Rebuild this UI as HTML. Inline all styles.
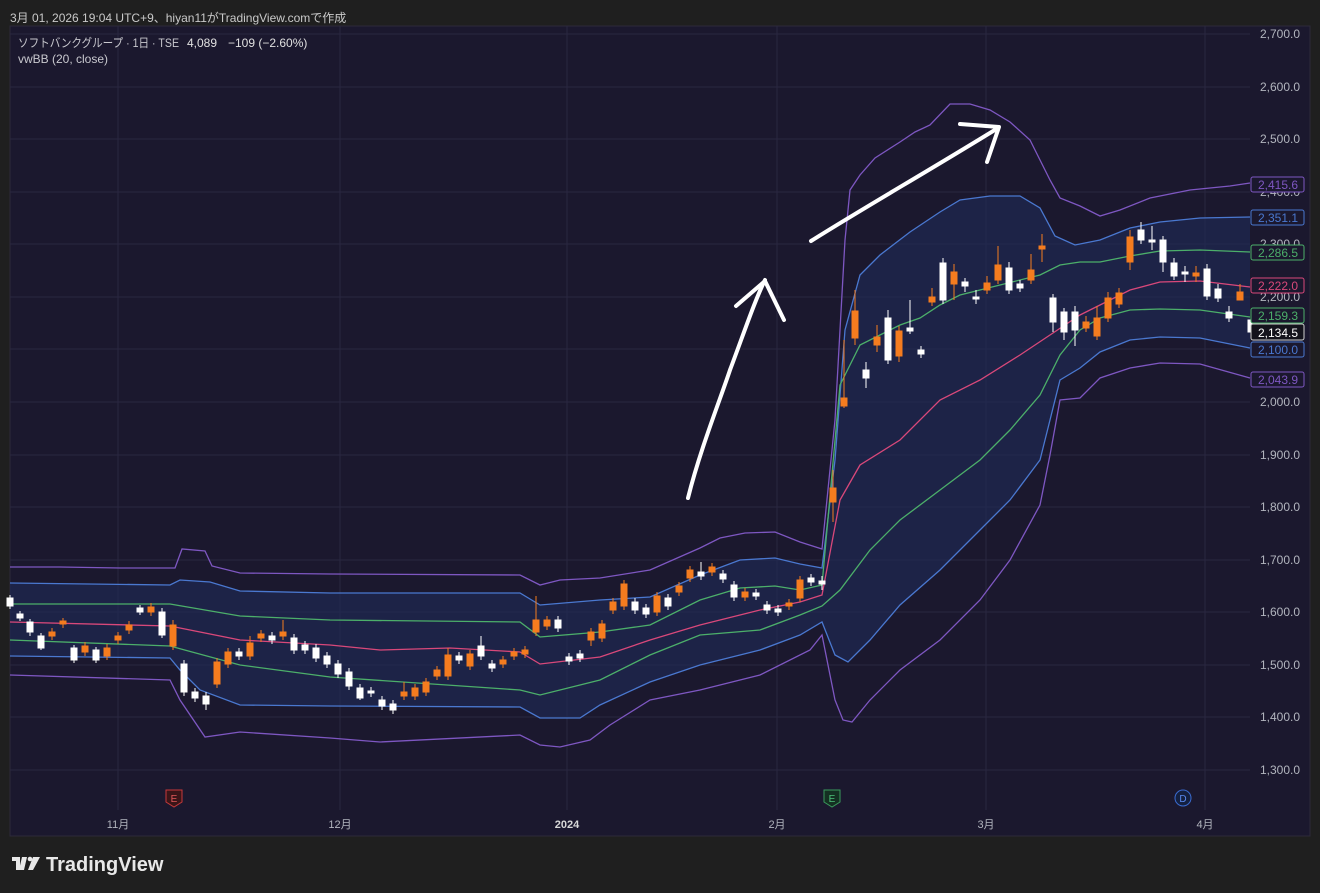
<!DOCTYPE html>
<html><head><meta charset="utf-8"><style>
html,body{margin:0;padding:0;background:#1f1f1f;width:1320px;height:893px;overflow:hidden;font-family:"Liberation Sans","Noto Sans CJK JP",sans-serif}
.top{position:absolute;left:10px;top:9px;font-size:12px;color:#c9c9c9}
</style></head><body>
<div class="top">3月 01, 2026 19:04 UTC+9、hiyan11がTradingView.comで作成</div>
<svg style="position:absolute;left:0;top:0" width="1320" height="893" font-family="Liberation Sans, Noto Sans CJK JP, sans-serif">
<rect x="10" y="26" width="1300" height="810" fill="#1b182e" stroke="#2c2a3a"/>
<g stroke="#2a2740" stroke-width="1">
<line x1="10" x2="1250" y1="34" y2="34"/><line x1="10" x2="1250" y1="87" y2="87"/><line x1="10" x2="1250" y1="139" y2="139"/><line x1="10" x2="1250" y1="192" y2="192"/><line x1="10" x2="1250" y1="244" y2="244"/><line x1="10" x2="1250" y1="297" y2="297"/><line x1="10" x2="1250" y1="349" y2="349"/><line x1="10" x2="1250" y1="402" y2="402"/><line x1="10" x2="1250" y1="455" y2="455"/><line x1="10" x2="1250" y1="507" y2="507"/><line x1="10" x2="1250" y1="560" y2="560"/><line x1="10" x2="1250" y1="612" y2="612"/><line x1="10" x2="1250" y1="665" y2="665"/><line x1="10" x2="1250" y1="717" y2="717"/><line x1="10" x2="1250" y1="770" y2="770"/>
<line y1="26" y2="810" x1="118" x2="118"/><line y1="26" y2="810" x1="340" x2="340"/><line y1="26" y2="810" x1="567" x2="567"/><line y1="26" y2="810" x1="777" x2="777"/><line y1="26" y2="810" x1="986" x2="986"/><line y1="26" y2="810" x1="1205" x2="1205"/>
</g>
<polygon fill="#1f2a55" fill-opacity="0.65" points="10,583 170,585 180,580 210,582 240,591 330,593 520,593 540,605 600,600 650,597 700,575 740,560 775,558 800,564 822,568 835,460 845,330 860,275 880,255 910,232 940,212 960,200 990,196 1020,196 1040,208 1055,236 1075,245 1100,240 1130,228 1160,222 1200,218 1250,217 1250,348 1200,338 1160,337 1130,340 1100,352 1080,368 1060,380 1040,460 1010,500 980,530 940,570 900,605 870,640 848,662 835,655 822,622 800,635 760,650 700,665 650,682 600,705 580,718 540,718 520,707 330,706 240,705 200,690 180,670 170,658 10,656"/>
<g fill="none" stroke-width="1.3">
<polyline stroke="#7e57c2" points="10,567 60,567 120,568 175,568 182,549 205,551 212,566 240,573 330,574 520,575 540,585 560,580 600,578 650,570 700,548 720,538 745,533 775,532 800,542 822,549 835,420 845,240 850,190 860,175 875,158 900,142 915,132 930,125 950,104 970,104 990,110 1010,122 1030,140 1050,180 1060,198 1080,206 1100,216 1120,210 1150,198 1190,190 1230,186 1250,183"/>
<polyline stroke="#4a78d0" points="10,583 170,585 180,580 210,582 240,591 330,593 520,593 540,605 600,600 650,597 700,575 740,560 775,558 800,564 822,568 835,460 845,330 860,275 880,255 910,232 940,212 960,200 990,196 1020,196 1040,208 1055,236 1075,245 1100,240 1130,228 1160,222 1200,218 1250,217"/>
<polyline stroke="#4caf6a" points="10,604 170,604 240,616 330,620 520,622 540,637 600,632 650,625 700,600 740,588 775,586 800,590 822,585 840,385 860,345 880,335 900,325 920,318 940,305 960,295 1000,285 1040,275 1060,265 1080,262 1100,262 1130,256 1160,251 1200,250 1250,252"/>
<polyline stroke="#d9487a" points="10,622 170,626 240,640 330,645 380,650 450,648 520,652 540,664 600,657 650,640 700,625 760,610 800,602 822,595 840,500 860,465 900,440 940,400 980,380 1020,355 1050,335 1080,315 1100,305 1130,290 1160,282 1200,281 1250,287"/>
<polyline stroke="#4caf6a" points="10,640 170,646 240,665 330,677 520,690 540,695 600,680 650,655 700,635 760,630 800,615 822,606 840,590 870,550 900,520 940,490 980,460 1010,430 1040,395 1060,355 1080,330 1100,318 1130,310 1160,309 1200,310 1250,317"/>
<polyline stroke="#4a78d0" points="10,656 170,658 180,670 200,690 240,705 330,706 520,707 540,718 580,718 600,705 650,682 700,665 760,650 800,635 822,622 835,655 848,662 870,640 900,605 940,570 980,530 1010,500 1040,460 1060,380 1080,368 1100,352 1130,340 1160,337 1200,338 1250,348"/>
<polyline stroke="#7e57c2" points="10,675 170,680 180,700 205,737 240,732 330,738 380,742 520,735 540,745 560,747 590,740 610,725 650,700 700,690 760,675 810,650 822,635 835,700 843,720 852,722 870,700 900,670 940,640 980,600 1010,560 1040,505 1050,455 1060,400 1080,398 1100,378 1130,368 1160,363 1200,364 1250,378"/>
</g>
<g>
<g fill="#ffffff" stroke="#ffffff">
<line x1="10" x2="10" y1="595" y2="609"/><rect x="7" y="598" width="6" height="8"/>
<line x1="20" x2="20" y1="611" y2="621"/><rect x="17" y="614" width="6" height="4"/>
<line x1="30" x2="30" y1="619" y2="636"/><rect x="27" y="622" width="6" height="10"/>
<line x1="41" x2="41" y1="633" y2="650"/><rect x="38" y="636" width="6" height="12"/>
<line x1="74" x2="74" y1="645" y2="663"/><rect x="71" y="648" width="6" height="12"/>
<line x1="96" x2="96" y1="647" y2="663"/><rect x="93" y="650" width="6" height="10"/>
<line x1="140" x2="140" y1="605" y2="615"/><rect x="137" y="608" width="6" height="4"/>
<line x1="162" x2="162" y1="608" y2="638"/><rect x="159" y="612" width="6" height="23"/>
<line x1="184" x2="184" y1="660" y2="696"/><rect x="181" y="664" width="6" height="28"/>
<line x1="195" x2="195" y1="688" y2="702"/><rect x="192" y="692" width="6" height="6"/>
<line x1="206" x2="206" y1="692" y2="710"/><rect x="203" y="696" width="6" height="8"/>
<line x1="239" x2="239" y1="648" y2="660"/><rect x="236" y="652" width="6" height="4"/>
<line x1="272" x2="272" y1="632" y2="644"/><rect x="269" y="636" width="6" height="4"/>
<line x1="294" x2="294" y1="634" y2="654"/><rect x="291" y="638" width="6" height="12"/>
<line x1="305" x2="305" y1="641" y2="654"/><rect x="302" y="645" width="6" height="5"/>
<line x1="316" x2="316" y1="644" y2="662"/><rect x="313" y="648" width="6" height="10"/>
<line x1="327" x2="327" y1="652" y2="668"/><rect x="324" y="656" width="6" height="8"/>
<line x1="338" x2="338" y1="660" y2="678"/><rect x="335" y="664" width="6" height="10"/>
<line x1="349" x2="349" y1="668" y2="690"/><rect x="346" y="672" width="6" height="14"/>
<line x1="360" x2="360" y1="684" y2="700"/><rect x="357" y="688" width="6" height="10"/>
<line x1="371" x2="371" y1="687" y2="697"/><rect x="368" y="691" width="6" height="2"/>
<line x1="382" x2="382" y1="696" y2="710"/><rect x="379" y="700" width="6" height="6"/>
<line x1="393" x2="393" y1="700" y2="714"/><rect x="390" y="704" width="6" height="6"/>
<line x1="459" x2="459" y1="652" y2="664"/><rect x="456" y="656" width="6" height="4"/>
<line x1="481" x2="481" y1="636" y2="660"/><rect x="478" y="646" width="6" height="10"/>
<line x1="492" x2="492" y1="660" y2="672"/><rect x="489" y="664" width="6" height="4"/>
<line x1="558" x2="558" y1="616" y2="632"/><rect x="555" y="620" width="6" height="8"/>
<line x1="569" x2="569" y1="653" y2="665"/><rect x="566" y="657" width="6" height="4"/>
<line x1="580" x2="580" y1="650" y2="662"/><rect x="577" y="654" width="6" height="4"/>
<line x1="635" x2="635" y1="598" y2="614"/><rect x="632" y="602" width="6" height="8"/>
<line x1="646" x2="646" y1="604" y2="618"/><rect x="643" y="608" width="6" height="6"/>
<line x1="668" x2="668" y1="594" y2="610"/><rect x="665" y="598" width="6" height="8"/>
<line x1="701" x2="701" y1="562" y2="580"/><rect x="698" y="572" width="6" height="4"/>
<line x1="723" x2="723" y1="570" y2="583"/><rect x="720" y="574" width="6" height="5"/>
<line x1="734" x2="734" y1="581" y2="601"/><rect x="731" y="585" width="6" height="12"/>
<line x1="756" x2="756" y1="589" y2="600"/><rect x="753" y="593" width="6" height="3"/>
<line x1="767" x2="767" y1="601" y2="614"/><rect x="764" y="605" width="6" height="5"/>
<line x1="778" x2="778" y1="605" y2="616"/><rect x="775" y="609" width="6" height="3"/>
<line x1="811" x2="811" y1="574" y2="586"/><rect x="808" y="578" width="6" height="4"/>
<line x1="822" x2="822" y1="576" y2="590"/><rect x="819" y="581" width="6" height="3"/>
<line x1="866" x2="866" y1="362" y2="388"/><rect x="863" y="370" width="6" height="8"/>
<line x1="888" x2="888" y1="310" y2="364"/><rect x="885" y="318" width="6" height="42"/>
<line x1="910" x2="910" y1="300" y2="334"/><rect x="907" y="328" width="6" height="3"/>
<line x1="921" x2="921" y1="346" y2="358"/><rect x="918" y="350" width="6" height="4"/>
<line x1="943" x2="943" y1="258" y2="304"/><rect x="940" y="263" width="6" height="37"/>
<line x1="965" x2="965" y1="278" y2="292"/><rect x="962" y="282" width="6" height="4"/>
<line x1="976" x2="976" y1="290" y2="304"/><rect x="973" y="297" width="6" height="2"/>
<line x1="1009" x2="1009" y1="262" y2="294"/><rect x="1006" y="268" width="6" height="22"/>
<line x1="1020" x2="1020" y1="280" y2="292"/><rect x="1017" y="284" width="6" height="4"/>
<line x1="1053" x2="1053" y1="294" y2="332"/><rect x="1050" y="298" width="6" height="24"/>
<line x1="1064" x2="1064" y1="308" y2="340"/><rect x="1061" y="312" width="6" height="20"/>
<line x1="1075" x2="1075" y1="306" y2="346"/><rect x="1072" y="312" width="6" height="18"/>
<line x1="1141" x2="1141" y1="222" y2="244"/><rect x="1138" y="230" width="6" height="10"/>
<line x1="1152" x2="1152" y1="226" y2="250"/><rect x="1149" y="240" width="6" height="2"/>
<line x1="1163" x2="1163" y1="236" y2="272"/><rect x="1160" y="240" width="6" height="22"/>
<line x1="1174" x2="1174" y1="258" y2="280"/><rect x="1171" y="263" width="6" height="13"/>
<line x1="1185" x2="1185" y1="266" y2="282"/><rect x="1182" y="272" width="6" height="2"/>
<line x1="1207" x2="1207" y1="264" y2="300"/><rect x="1204" y="269" width="6" height="27"/>
<line x1="1218" x2="1218" y1="284" y2="302"/><rect x="1215" y="289" width="6" height="9"/>
<line x1="1229" x2="1229" y1="306" y2="322"/><rect x="1226" y="312" width="6" height="6"/>
<line x1="1251" x2="1251" y1="316" y2="336"/><rect x="1248" y="320" width="5" height="12"/>
</g>
<g fill="#f57c1f" stroke="#f57c1f">
<line x1="52" x2="52" y1="628" y2="640"/><rect x="49" y="632" width="6" height="4"/>
<line x1="63" x2="63" y1="618" y2="628"/><rect x="60" y="621" width="6" height="3"/>
<line x1="85" x2="85" y1="642" y2="656"/><rect x="82" y="646" width="6" height="6"/>
<line x1="107" x2="107" y1="644" y2="660"/><rect x="104" y="648" width="6" height="8"/>
<line x1="118" x2="118" y1="632" y2="644"/><rect x="115" y="636" width="6" height="4"/>
<line x1="129" x2="129" y1="621" y2="634"/><rect x="126" y="625" width="6" height="5"/>
<line x1="151" x2="151" y1="603" y2="616"/><rect x="148" y="607" width="6" height="5"/>
<line x1="173" x2="173" y1="620" y2="650"/><rect x="170" y="625" width="6" height="21"/>
<line x1="217" x2="217" y1="658" y2="688"/><rect x="214" y="662" width="6" height="22"/>
<line x1="228" x2="228" y1="648" y2="668"/><rect x="225" y="652" width="6" height="12"/>
<line x1="250" x2="250" y1="636" y2="660"/><rect x="247" y="643" width="6" height="13"/>
<line x1="261" x2="261" y1="630" y2="642"/><rect x="258" y="634" width="6" height="4"/>
<line x1="283" x2="283" y1="620" y2="640"/><rect x="280" y="632" width="6" height="4"/>
<line x1="404" x2="404" y1="682" y2="700"/><rect x="401" y="692" width="6" height="4"/>
<line x1="415" x2="415" y1="684" y2="700"/><rect x="412" y="688" width="6" height="8"/>
<line x1="426" x2="426" y1="678" y2="696"/><rect x="423" y="682" width="6" height="10"/>
<line x1="437" x2="437" y1="666" y2="680"/><rect x="434" y="670" width="6" height="6"/>
<line x1="448" x2="448" y1="648" y2="680"/><rect x="445" y="655" width="6" height="21"/>
<line x1="470" x2="470" y1="650" y2="670"/><rect x="467" y="654" width="6" height="12"/>
<line x1="503" x2="503" y1="656" y2="668"/><rect x="500" y="660" width="6" height="4"/>
<line x1="514" x2="514" y1="648" y2="660"/><rect x="511" y="652" width="6" height="4"/>
<line x1="525" x2="525" y1="646" y2="658"/><rect x="522" y="650" width="6" height="4"/>
<line x1="536" x2="536" y1="596" y2="636"/><rect x="533" y="620" width="6" height="12"/>
<line x1="547" x2="547" y1="616" y2="630"/><rect x="544" y="620" width="6" height="6"/>
<line x1="591" x2="591" y1="628" y2="646"/><rect x="588" y="632" width="6" height="8"/>
<line x1="602" x2="602" y1="620" y2="642"/><rect x="599" y="624" width="6" height="14"/>
<line x1="613" x2="613" y1="598" y2="614"/><rect x="610" y="602" width="6" height="8"/>
<line x1="624" x2="624" y1="580" y2="610"/><rect x="621" y="584" width="6" height="22"/>
<line x1="657" x2="657" y1="592" y2="616"/><rect x="654" y="596" width="6" height="16"/>
<line x1="679" x2="679" y1="582" y2="596"/><rect x="676" y="586" width="6" height="6"/>
<line x1="690" x2="690" y1="566" y2="582"/><rect x="687" y="570" width="6" height="8"/>
<line x1="712" x2="712" y1="563" y2="576"/><rect x="709" y="567" width="6" height="5"/>
<line x1="745" x2="745" y1="588" y2="601"/><rect x="742" y="592" width="6" height="5"/>
<line x1="789" x2="789" y1="599" y2="610"/><rect x="786" y="603" width="6" height="3"/>
<line x1="800" x2="800" y1="576" y2="602"/><rect x="797" y="580" width="6" height="18"/>
<line x1="833" x2="833" y1="470" y2="522"/><rect x="830" y="488" width="6" height="14"/>
<line x1="844" x2="844" y1="340" y2="408"/><rect x="841" y="398" width="6" height="8"/>
<line x1="855" x2="855" y1="290" y2="345"/><rect x="852" y="311" width="6" height="27"/>
<line x1="877" x2="877" y1="325" y2="352"/><rect x="874" y="337" width="6" height="8"/>
<line x1="899" x2="899" y1="326" y2="362"/><rect x="896" y="331" width="6" height="25"/>
<line x1="932" x2="932" y1="288" y2="306"/><rect x="929" y="297" width="6" height="5"/>
<line x1="954" x2="954" y1="264" y2="300"/><rect x="951" y="272" width="6" height="12"/>
<line x1="987" x2="987" y1="276" y2="294"/><rect x="984" y="283" width="6" height="7"/>
<line x1="998" x2="998" y1="246" y2="284"/><rect x="995" y="265" width="6" height="15"/>
<line x1="1031" x2="1031" y1="254" y2="284"/><rect x="1028" y="270" width="6" height="10"/>
<line x1="1042" x2="1042" y1="234" y2="262"/><rect x="1039" y="246" width="6" height="3"/>
<line x1="1086" x2="1086" y1="316" y2="332"/><rect x="1083" y="322" width="6" height="6"/>
<line x1="1097" x2="1097" y1="306" y2="340"/><rect x="1094" y="318" width="6" height="18"/>
<line x1="1108" x2="1108" y1="292" y2="322"/><rect x="1105" y="298" width="6" height="20"/>
<line x1="1119" x2="1119" y1="288" y2="308"/><rect x="1116" y="293" width="6" height="11"/>
<line x1="1130" x2="1130" y1="230" y2="270"/><rect x="1127" y="237" width="6" height="25"/>
<line x1="1196" x2="1196" y1="266" y2="282"/><rect x="1193" y="273" width="6" height="3"/>
<line x1="1240" x2="1240" y1="284" y2="300"/><rect x="1237" y="292" width="6" height="8"/>
</g>
</g>
<g stroke="#ffffff" stroke-width="4" fill="none" stroke-linecap="round" stroke-linejoin="round">
<path d="M688 498 C700 450 720 400 730 370 C745 330 755 300 765 280"/>
<path d="M736 306 L765 281 L784 320"/>
<path d="M811 241 C860 210 930 170 998 128"/>
<path d="M960 124 L999 127 L987 162"/>
</g>
<g font-size="12" fill="#b2b5be" text-anchor="start">
<text x="1260" y="38">2,700.0</text><text x="1260" y="91">2,600.0</text><text x="1260" y="143">2,500.0</text><text x="1260" y="196">2,400.0</text><text x="1260" y="248">2,300.0</text><text x="1260" y="301">2,200.0</text><text x="1260" y="406">2,000.0</text><text x="1260" y="459">1,900.0</text><text x="1260" y="511">1,800.0</text><text x="1260" y="564">1,700.0</text><text x="1260" y="616">1,600.0</text><text x="1260" y="669">1,500.0</text><text x="1260" y="721">1,400.0</text><text x="1260" y="774">1,300.0</text>
</g>
<g font-size="12" text-anchor="start">
<rect x="1251" y="177" width="53" height="15" fill="#1b182e" stroke="#7e57c2" rx="2"/><text x="1258" y="189" fill="#7e57c2">2,415.6</text>
<rect x="1251" y="210" width="53" height="15" fill="#1b182e" stroke="#4a78d0" rx="2"/><text x="1258" y="222" fill="#4a78d0">2,351.1</text>
<rect x="1251" y="245" width="53" height="15" fill="#1b182e" stroke="#4caf6a" rx="2"/><text x="1258" y="257" fill="#4caf6a">2,286.5</text>
<rect x="1251" y="278" width="53" height="15" fill="#1b182e" stroke="#d9487a" rx="2"/><text x="1258" y="290" fill="#d9487a">2,222.0</text>
<rect x="1251" y="308" width="53" height="15" fill="#1b182e" stroke="#4caf6a" rx="2"/><text x="1258" y="320" fill="#4caf6a">2,159.3</text>
<rect x="1251" y="324" width="53" height="16" fill="#14131c" stroke="#d0d0d0" rx="2"/><text x="1258" y="337" fill="#ffffff">2,134.5</text>
<rect x="1251" y="342" width="53" height="15" fill="#1b182e" stroke="#4a78d0" rx="2"/><text x="1258" y="354" fill="#4a78d0">2,100.0</text>
<rect x="1251" y="372" width="53" height="15" fill="#1b182e" stroke="#7e57c2" rx="2"/><text x="1258" y="384" fill="#7e57c2">2,043.9</text>
</g>
<g font-size="11" fill="#b2b5be" text-anchor="middle">
<text x="118" y="828">11月</text><text x="340" y="828">12月</text><text x="567" y="828" font-weight="bold" fill="#d8d8d8">2024</text><text x="777" y="828">2月</text><text x="986" y="828">3月</text><text x="1205" y="828">4月</text>
</g>
<path d="M166 790 h16 v12 l-8 5 l-8 -5z" fill="#3a1518" stroke="#c7393b"/><text x="174" y="802" font-size="10" fill="#e0585a" text-anchor="middle">E</text>
<path d="M824 790 h16 v12 l-8 5 l-8 -5z" fill="#143022" stroke="#3a9a5c"/><text x="832" y="802" font-size="10" fill="#4cc079" text-anchor="middle">E</text>
<circle cx="1183" cy="798" r="8" fill="#142040" stroke="#3a6bd0"/><text x="1183" y="802" font-size="10" fill="#5a8af0" text-anchor="middle">D</text>
<text x="18" y="47" font-size="12" fill="#c9c9cf" textLength="161" lengthAdjust="spacingAndGlyphs">ソフトバンクグループ · 1日 · TSE</text>
<text x="187" y="47" font-size="12" fill="#e0e0e0">4,089</text>
<text x="228" y="47" font-size="12" fill="#e0e0e0">−109 (−2.60%)</text>
<text x="18" y="63" font-size="12" fill="#c9c9cf">vwBB (20, close)</text>
<g fill="#e8e8e8"><rect x="12" y="857" width="8" height="4"/><rect x="16" y="857" width="4" height="13"/><path d="M22 857 h5 l-3 13 h-5z"/><circle cx="30" cy="859" r="2.3"/><path d="M33 857 h7 l-7 13 h-5z"/></g>
<text x="46" y="871" font-size="20" font-weight="bold" fill="#e8e8e8">TradingView</text>
</svg>
</body></html>
